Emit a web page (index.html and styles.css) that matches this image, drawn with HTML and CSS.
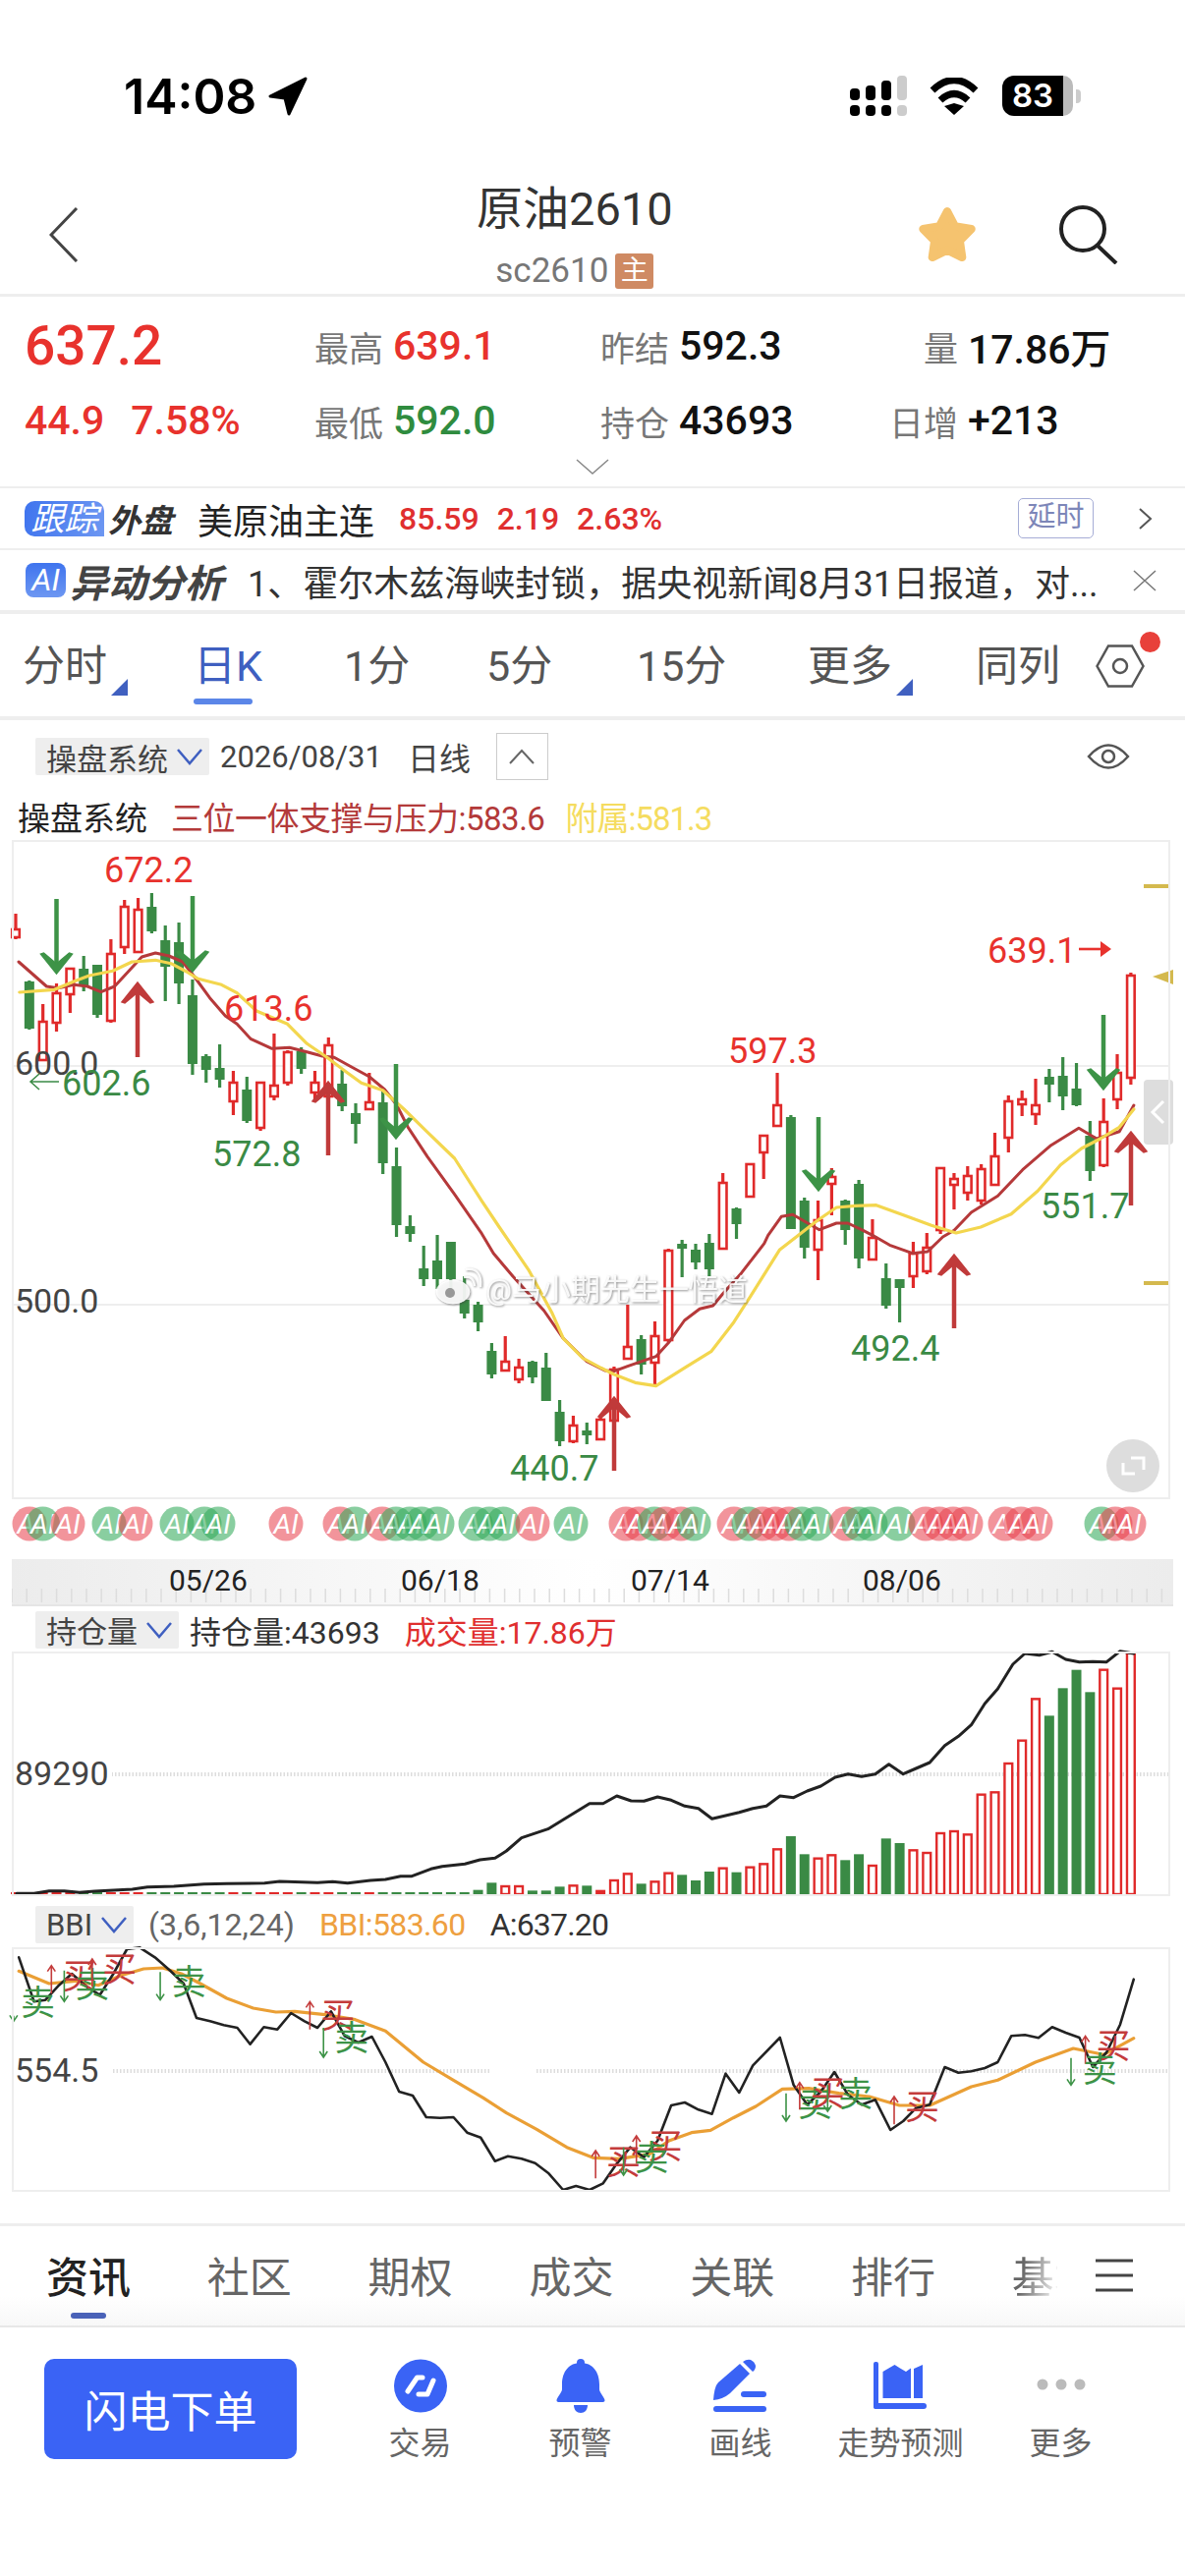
FILE: index.html
```html
<!DOCTYPE html>
<html lang="zh-CN">
<head>
  <meta charset="UTF-8" />
  <meta name="viewport" content="width=device-width, initial-scale=1.0"/>
  <title>原油2610</title>
  <link rel="stylesheet" href="styles.css">
</head>
<body>
  <div class="status-bar">
    <div class="status-left">
      <span class="time">14:08</span>
      <svg class="loc-icon" width="42" height="40" viewBox="0 0 42 40"><path d="M39 2 3 20l15 2 4 16z" fill="#000" stroke="#000" stroke-width="3" stroke-linejoin="round"/></svg>
    </div>
    <div class="status-right">
      <svg width="58" height="41" viewBox="0 0 58 41">
        <rect x="0" y="13" width="10" height="12" rx="4"/><rect x="16" y="10" width="10" height="15" rx="4"/><rect x="32" y="5" width="10" height="20" rx="4"/><rect x="48" y="0" width="10" height="25" rx="4" fill="#ccc"/>
        <rect x="0" y="30" width="10" height="11" rx="4"/><rect x="16" y="30" width="10" height="11" rx="4"/><rect x="32" y="30" width="10" height="11" rx="4"/><rect x="48" y="30" width="10" height="11" rx="4" fill="#ccc"/>
      </svg>
      <svg class="wifi" width="52" height="38" viewBox="0 0 52 38">
        <path d="M4 13Q26-8 48 13" fill="none" stroke="#000" stroke-width="7"/>
        <path d="M12 23Q26 10 40 23" fill="none" stroke="#000" stroke-width="7"/>
        <path d="M16 29 26 26 36 29 26 38z"/>
      </svg>
      <div class="battery"><div class="battery-fill">83</div><div class="battery-rest"></div><div class="battery-nub"></div></div>
    </div>
  </div>

  <div class="nav">
    <svg class="nav-back" width="30" height="56" viewBox="0 0 30 56"><path d="M28 1 2 28l26 27" fill="none" stroke="#444" stroke-width="3"/></svg>
    <div class="nav-title">
      <div class="nav-name">原油2610</div>
      <div class="nav-code">sc2610<span class="main-tag">主</span></div>
    </div>
    <div class="nav-actions">
      <svg width="62" height="62" viewBox="0 0 60 60"><polygon points="30,7 37.6,21.5 53.8,24.3 42.4,36 44.7,52.2 30,45 15.3,52.2 17.6,36 6.2,24.3 22.4,21.5" fill="#f5c36f" stroke="#f5c36f" stroke-width="8" stroke-linejoin="round"/></svg>
      <svg width="60" height="60" viewBox="0 0 60 60"><circle cx="24" cy="24" r="22" fill="none" stroke="#222" stroke-width="4"/><path d="M39 41 58 59" stroke="#222" stroke-width="4"/></svg>
    </div>
  </div>

  <div class="quote">
    <div class="quote-grid">
      <div class="price">637.2</div>
      <div class="cell"><span class="cell-label">最高</span><span class="cell-value up">639.1</span></div>
      <div class="cell"><span class="cell-label">昨结</span><span class="cell-value">592.3</span></div>
      <div class="cell cell-end"><span class="cell-label">量</span><span class="cell-value">17.86万</span></div>
      <div class="change"><span>44.9</span><span>7.58%</span></div>
      <div class="cell"><span class="cell-label">最低</span><span class="cell-value down">592.0</span></div>
      <div class="cell"><span class="cell-label">持仓</span><span class="cell-value">43693</span></div>
      <div class="cell cell-end"><span class="cell-label">日增</span><span class="cell-value">+213</span></div>
    </div>
    <svg class="quote-more" width="34" height="16" viewBox="0 0 34 16"><path d="M1 1 17 15 33 1" fill="none" stroke="#888" stroke-width="1.5"/></svg>
  </div>

  <div class="follow-row">
    <span class="follow-tag">跟踪</span><span class="follow-sub">外盘</span>
    <span class="follow-name">美原油主连</span>
    <span class="follow-num">85.59</span><span class="follow-num">2.19</span><span class="follow-num">2.63%</span>
    <span class="delay-tag">延时</span>
    <svg width="15" height="22" viewBox="0 0 15 22"><path d="M2 1 13 11 2 21" fill="none" stroke="#555" stroke-width="2"/></svg>
  </div>

  <div class="ai-row">
    <span class="ai-tag">AI</span><span class="ai-title">异动分析</span>
    <span class="ai-text">1、霍尔木兹海峡封锁，据央视新闻8月31日报道，对...</span>
    <svg width="24" height="22" viewBox="0 0 24 22"><path d="M1 1 23 21M23 1 1 21" fill="none" stroke="#777" stroke-width="1.5"/></svg>
  </div>

  <div class="period-tabs">
    <div class="period">分时<i class="corner"></i></div>
    <div class="period period-on">日K</div>
    <div class="period">1分</div>
    <div class="period">5分</div>
    <div class="period">15分</div>
    <div class="period">更多<i class="corner"></i></div>
    <div class="period">同列</div>
    <div class="period period-gear">
      <svg width="50" height="44" viewBox="0 0 50 44"><path d="M1.5 22 13 1.5H37L48.5 22 37 42.5H13Z" fill="none" stroke="#555" stroke-width="2.5"/><circle cx="25" cy="22" r="7" fill="none" stroke="#555" stroke-width="2.5"/></svg>
      <i class="red-dot"></i>
    </div>
  </div>

  <div class="chart-head">
    <div class="picker">操盘系统<svg width="26" height="18" viewBox="0 0 26 18"><path d="M1 2 13 16 25 2" fill="none" stroke="#3f5fc0" stroke-width="2.5"/></svg></div>
    <span class="chart-date">2026/08/31</span>
    <span class="chart-kind">日线</span>
    <div class="fold-btn"><svg width="26" height="16" viewBox="0 0 26 16"><path d="M1 15 13 2 25 15" fill="none" stroke="#666" stroke-width="2"/></svg></div>
    <svg class="eye" width="44" height="30" viewBox="0 0 44 30"><path d="M2 15Q22-8 42 15 22 38 2 15Z" fill="none" stroke="#555" stroke-width="2.5"/><circle cx="22" cy="15" r="6" fill="none" stroke="#555" stroke-width="2.5"/></svg>
  </div>
  <div class="chart-legend">
    <span>操盘系统</span>
    <span class="legend-red">三位一体支撑与压力:583.6</span>
    <span class="legend-yellow">附属:581.3</span>
  </div>
  <div class="panel panel-main"><svg id="mainChart" viewBox="12 856 1179 671"></svg></div>
  <svg id="aiMarks" class="ai-marks" viewBox="0 1527 1206 61"></svg>
  <svg id="timeAxis" class="time-axis" viewBox="12 1588 1182 49"></svg>

  <div class="sub-head">
    <div class="picker">持仓量<svg width="26" height="18" viewBox="0 0 26 18"><path d="M1 2 13 16 25 2" fill="none" stroke="#3f5fc0" stroke-width="2.5"/></svg></div>
    <span class="sub-text">持仓量:43693</span>
    <span class="sub-red">成交量:17.86万</span>
  </div>
  <div class="panel panel-sub"><svg id="volChart" viewBox="12 1682 1179 249"></svg></div>

  <div class="sub-head sub-head-bbi">
    <div class="picker">BBI<svg width="26" height="18" viewBox="0 0 26 18"><path d="M1 2 13 16 25 2" fill="none" stroke="#3f5fc0" stroke-width="2.5"/></svg></div>
    <span class="sub-gray">(3,6,12,24)</span>
    <span class="sub-orange">BBI:583.60</span>
    <span class="sub-text">A:637.20</span>
  </div>
  <div class="panel panel-sub"><svg id="bbiChart" viewBox="12 1983 1179 249"></svg></div>

  <div class="info-tabs">
    <div class="info-tab info-tab-on">资讯</div>
    <div class="info-tab">社区</div>
    <div class="info-tab">期权</div>
    <div class="info-tab">成交</div>
    <div class="info-tab">关联</div>
    <div class="info-tab">排行</div>
    <div class="info-tab info-tab-fade">基本</div>
    <svg class="info-menu" width="38" height="34" viewBox="0 0 38 34"><path d="M0 2H38M0 17H38M0 32H38" stroke="#444" stroke-width="3"/></svg>
  </div>

  <div class="bottom-bar">
    <button class="order-btn">闪电下单</button>
    <div class="action">
      <svg width="54" height="55" viewBox="0 0 54 55"><circle cx="27" cy="27.5" r="27" fill="#3a63f5"/><path d="M14 33 23.500 19H29M25 36H34L40 22" fill="none" stroke="#fff" stroke-width="5" stroke-linecap="round" stroke-linejoin="round"/></svg>
      <span>交易</span>
    </div>
    <div class="action">
      <svg width="50" height="55" viewBox="0 0 50 55"><circle cx="25" cy="4" r="4" fill="#3a63f5"/><path d="M25 4C13 4 6 13 6 26v5c0 3-5 8-5.500 11-.2 1 .8 2 2 2h45c1.200 0 2.200-1 2-2-.5-3-5.500-8-5.500-11v-5C44 13 37 4 25 4z" fill="#3a63f5"/><path d="M18 47h14c0 5-3 8-7 8s-7-3-7-8z" fill="#3a63f5"/></svg>
      <span>预警</span>
    </div>
    <div class="action">
      <svg width="55" height="55" viewBox="0 0 55 55"><path d="M0 42Q1 28 5 24L27 5 37 15 17 35Q10 41 0 42Z" fill="#3a63f5"/><path d="M30 3Q34 0 38 1 42 3 43 7 43 11 40 13Z" fill="#3a63f5"/><rect x="28" y="33" width="26" height="6" rx="3" fill="#3a63f5"/><rect x="0" y="48" width="54" height="6" rx="3" fill="#3a63f5"/></svg>
      <span>画线</span>
    </div>
    <div class="action">
      <svg width="55" height="55" viewBox="0 0 55 55"><rect x="0" y="3" width="5" height="48" rx="2" fill="#3a63f5"/><rect x="0" y="45" width="54" height="6" rx="3" fill="#3a63f5"/><path d="M9.500 13 21.500 6 27 9.500 33 13 38 9.500V40H9.500Z" fill="#3a63f5"/><path d="M41 10 50 6V40H41Z" fill="#3a63f5"/></svg>
      <span>走势预测</span>
    </div>
    <div class="action">
      <svg width="50" height="55" viewBox="0 0 50 55"><circle cx="6" cy="26" r="5.5" fill="#bbb"/><circle cx="25" cy="26" r="5.5" fill="#bbb"/><circle cx="44" cy="26" r="5.5" fill="#bbb"/></svg>
      <span>更多</span>
    </div>
  </div>

  <script src="chart.js"></script>
</body>
</html>
```
FILE: styles.css
```css
* {
  box-sizing: border-box;
}

html, body {
  margin: 0;
  padding: 0;
}

body {
  width: 1206px;
  height: 2622px;
  overflow: hidden;
  background-color: #fff;
  color: #222;
  font-family: Roboto, 'Noto Sans CJK SC', sans-serif;
}

svg {
  display: block;
  flex-shrink: 0;
}

/* status bar */
.status-bar {
  height: 175px;
  padding: 77px 106px 0 126px;
  display: flex;
  justify-content: space-between;
  align-items: flex-start;
}

.status-left {
  display: flex;
  align-items: center;
  gap: 11px;
  height: 41px;
}

.time {
  font-family: Inter, sans-serif;
  font-size: 50px;
  font-weight: 600;
  color: #000;
}

.status-right {
  display: flex;
  align-items: flex-start;
  gap: 22px;
}

.wifi {
  margin-top: 2px;
}

.battery {
  display: flex;
  align-items: center;
  height: 41px;
  margin-left: 1px;
}

.battery-fill {
  width: 62px;
  height: 41px;
  background-color: #000;
  color: #fff;
  border-radius: 12px 0 0 12px;
  font-family: Inter, sans-serif;
  font-size: 33px;
  font-weight: 600;
  line-height: 41px;
  text-align: center;
}

.battery-rest {
  width: 10px;
  height: 41px;
  background-color: #bbb;
  border-radius: 0 10px 10px 0;
}

.battery-nub {
  width: 5px;
  height: 14px;
  margin-left: 3px;
  background-color: #ccc;
  border-radius: 0 4px 4px 0;
}

/* nav */
.nav {
  height: 127px;
  padding: 4px 68px 0 50px;
  display: grid;
  grid-template-columns: 435px auto 1fr;
  align-items: center;
  border-bottom: 3px solid #eee;
}

.nav-title {
  text-align: center;
}

.nav-name {
  font-size: 47px;
  line-height: 58px;
  color: #333;
}

.nav-code {
  display: flex;
  align-items: center;
  justify-content: center;
  gap: 7px;
  margin-top: 16px;
  font-size: 35px;
  line-height: 36px;
  color: #777;
}

.main-tag {
  width: 39px;
  height: 36px;
  background-color: #cf8a63;
  color: #fff;
  border-radius: 3px;
  font-size: 28px;
  text-align: center;
}

.nav-actions {
  display: flex;
  justify-content: flex-end;
  align-items: center;
  gap: 83px;
}

/* quote block */
.quote {
  height: 195px;
  padding: 25px 0 0 25px;
  border-bottom: 2px solid #eee;
}

.quote-grid {
  display: grid;
  grid-template-columns: 295px 291px 294px auto;
  grid-auto-rows: 50px;
  row-gap: 26px;
  align-items: center;
}

.price {
  font-size: 55px;
  font-weight: 500;
  color: #e8322d;
}

.change {
  display: flex;
  gap: 27px;
  font-size: 41px;
  font-weight: 500;
  color: #e8322d;
}

.cell {
  display: flex;
  align-items: center;
  gap: 10px;
}

.cell-label {
  font-size: 35px;
  color: #777;
  white-space: nowrap;
}

.cell-value {
  font-size: 41px;
  font-weight: 500;
  color: #111;
}

.cell-end .cell-label {
  width: 70px;
  text-align: right;
}

.up {
  color: #e8322d;
}

.down {
  color: #2f8c3f;
}

.quote-more {
  margin: 14px 0 0 561px;
}

/* follow + ai rows */
.follow-row, .ai-row {
  display: flex;
  align-items: center;
  border-bottom: 2px solid #eee;
  padding-left: 25px;
}

.follow-row {
  height: 63px;
}

.follow-tag {
  width: 81px;
  height: 36px;
  background: linear-gradient(100deg, #3f74ee, #6d97f2);
  border-radius: 10px 10px 0 10px;
  color: #fff;
  font-size: 34px;
  font-style: italic;
  line-height: 36px;
  text-align: center;
}

.follow-sub {
  margin-left: 4px;
  font-size: 33px;
  font-style: italic;
  font-weight: 700;
  color: #333;
}

.follow-name {
  margin-left: 25px;
  font-size: 36px;
  color: #222;
}

.follow-num {
  margin-left: 18px;
  font-size: 32px;
  font-weight: 500;
  color: #e02f2f;
}

.follow-name + .follow-num {
  margin-left: 25px;
}

.delay-tag {
  width: 77px;
  height: 41px;
  margin: 0 45px 0 auto;
  border: 1.5px solid #a6add6;
  border-radius: 5px;
  color: #7d86b8;
  font-size: 29px;
  line-height: 37px;
  text-align: center;
}

.follow-row svg {
  margin-right: 33px;
}

.ai-row {
  height: 65px;
  border-bottom-width: 4px;
  padding-left: 26px;
}

.ai-tag {
  width: 41px;
  height: 35px;
  background: linear-gradient(#3f74ee, #6d97f2);
  border-radius: 8px;
  color: #fff;
  font-size: 32px;
  font-style: italic;
  line-height: 35px;
  text-align: center;
}

.ai-title {
  margin-left: 4px;
  font-size: 39px;
  font-style: italic;
  font-weight: 700;
  color: #444;
}

.ai-text {
  margin-left: 25px;
  width: 901px;
  font-size: 36px;
  color: #333;
  white-space: nowrap;
}

/* period tabs */
.period-tabs {
  height: 108px;
  padding: 2px 0 0 23px;
  display: grid;
  grid-template-columns: 174px 153px 145px 153px 174px 171px 122px auto;
  align-items: center;
  border-bottom: 4px solid #eee;
}

.period {
  position: relative;
  display: flex;
  align-items: flex-end;
  font-size: 43px;
  line-height: 56px;
  color: #555;
}

.corner {
  width: 0;
  height: 0;
  margin: 0 0 -2px 4px;
  border-left: 17px solid transparent;
  border-bottom: 17px solid #4060c0;
}

.period-on {
  color: #3f5fc0;
}

.period-on::after {
  content: "";
  position: absolute;
  left: 0;
  bottom: -11px;
  width: 60px;
  height: 6px;
  background-color: #5b86e8;
  border-radius: 3px;
}

.period-gear {
  align-items: center;
}

.red-dot {
  position: absolute;
  left: 45px;
  top: -13px;
  width: 21px;
  height: 21px;
  background-color: #e8403a;
  border-radius: 50%;
}

/* chart heads */
.chart-head {
  height: 74px;
  padding-left: 36px;
  display: flex;
  align-items: center;
  font-size: 32px;
  color: #444;
}

.picker {
  height: 38px;
  padding: 0 7px 0 11px;
  display: flex;
  align-items: center;
  gap: 9px;
  background-color: #eee;
  border-radius: 2px;
  font-size: 31px;
  color: #444;
}

.chart-date {
  margin-left: 11px;
  font-size: 31px;
}

.chart-kind {
  margin-left: 26px;
}

.fold-btn {
  width: 53px;
  height: 48px;
  margin-left: 26px;
  display: flex;
  align-items: center;
  justify-content: center;
  border: 1.5px solid #ccc;
}

.eye {
  margin-left: auto;
  margin-right: 56px;
}

.chart-legend {
  height: 48px;
  padding-left: 18px;
  display: flex;
  align-items: center;
  gap: 24px;
  font-size: 33px;
  color: #222;
}

.legend-red {
  color: #b33a3a;
  letter-spacing: -0.5px;
}

.legend-yellow {
  margin-left: -3px;
  color: #f5dc60;
  letter-spacing: -1px;
}

.panel {
  width: 1179px;
  margin-left: 12px;
  outline: 2px solid #eee;
  outline-offset: -2px;
}

.panel svg {
  width: 100%;
  height: 100%;
  overflow: visible;
}

.panel-main {
  height: 671px;
}

.panel-sub {
  height: 249px;
}

.ai-marks {
  width: 1206px;
  height: 61px;
}

.time-axis {
  width: 1182px;
  height: 49px;
  margin-left: 12px;
}

.sub-head {
  height: 45px;
  padding-left: 36px;
  display: flex;
  align-items: center;
  font-size: 32px;
}

.sub-head-bbi {
  height: 52px;
  padding-top: 6px;
}

.sub-text {
  margin-left: 11px;
  color: #333;
}

.sub-red {
  margin-left: 25px;
  color: #e02f2f;
}

.sub-gray {
  margin-left: 15px;
  color: #666;
}

.sub-orange {
  margin-left: 25px;
  color: #eea040;
  letter-spacing: -0.6px;
}

.sub-orange + .sub-text {
  margin-left: 25px;
  letter-spacing: -0.8px;
}

/* svg chart text */
.lb {
  font-family: Roboto, sans-serif;
  font-size: 36px;
}

.lb-axis {
  font-size: 34px;
  fill: #444;
}

.lb-up {
  fill: #e8322d;
}

.lb-down {
  fill: #3a8a45;
}

.lb-date {
  font-size: 30px;
  fill: #222;
}

.mark-ai {
  font-family: Roboto, sans-serif;
  font-size: 28px;
  font-style: italic;
  fill: #fff;
  text-anchor: middle;
}

.mark-bs {
  font-family: 'Noto Sans CJK SC', sans-serif;
  font-size: 35px;
  text-anchor: middle;
}

.watermark {
  font-family: Roboto, 'Noto Sans CJK SC', sans-serif;
  font-size: 30px;
  fill: rgba(255, 255, 255, 0.9);
  filter: drop-shadow(1px 1px 1px rgba(60, 60, 60, 0.6));
}

.watermark-logo {
  fill: rgba(255, 255, 255, 0.9);
  stroke: rgba(255, 255, 255, 0.9);
  filter: drop-shadow(1px 1px 1px rgba(60, 60, 60, 0.6));
}

/* bottom tabs */
.info-tabs {
  position: relative;
  height: 106px;
  margin-top: 32px;
  padding-left: 47px;
  display: flex;
  align-items: flex-start;
  border-top: 3px solid #eee;
  border-bottom: 2px solid #e8e8e8;
  background: linear-gradient(#fff 70%, #f8f8f8);
}

.info-tab {
  position: relative;
  width: 163.8px;
  padding-top: 23px;
  font-size: 43px;
  line-height: 60px;
  color: #666;
}

.info-tab-on {
  color: #222;
  font-weight: 500;
}

.info-tab-on::after {
  content: "";
  position: absolute;
  left: 25px;
  top: 88px;
  width: 36px;
  height: 6px;
  background-color: #4a62b8;
  border-radius: 3px;
}

.info-tab-fade {
  width: 46px;
  overflow: hidden;
  white-space: nowrap;
  -webkit-mask-image: linear-gradient(100deg, #000 30%, transparent);
  mask-image: linear-gradient(100deg, #000 30%, transparent);
}

.info-menu {
  position: absolute;
  left: 1115px;
  top: 33px;
}

.bottom-bar {
  padding: 32px 0 0 45px;
  display: flex;
  align-items: flex-start;
}

.order-btn {
  width: 257px;
  height: 102px;
  margin-right: 44px;
  border: none;
  border-radius: 10px;
  background-color: #3a63f5;
  color: #fff;
  font-family: Roboto, 'Noto Sans CJK SC', sans-serif;
  font-size: 44px;
}

.action {
  width: 163px;
  display: flex;
  flex-direction: column;
  align-items: center;
  font-size: 32px;
  line-height: 40px;
  color: #666;
}

.action svg {
  margin-bottom: 11px;
}
```
FILE: chart.js
```js
// [colour, high, body top, body bottom, low]
const candles = [
  ['r',931,947,955,957],['g',999,1000,1048,1049],['r',1023,1041,1080,1081],['r',1002,1012,1042,1051],
  ['r',987,987,1013,1032],['g',974,987,1005,1010],['g',983,983,1034,1037],['r',957,972,1040,1042],
  ['r',917,924,965,972],['r',915,927,970,970],['g',910,924,949,951],['g',943,958,985,1020],
  ['g',940,960,1002,1023],['g',998,1014,1084,1095],['g',1074,1076,1090,1103],['g',1064,1088,1100,1108],
  ['r',1091,1103,1122,1136],['g',1097,1110,1142,1144],['r',1102,1103,1149,1152],['r',1053,1106,1117,1121],
  ['r',1070,1072,1103,1106],['g',1067,1071,1089,1094],['r',1091,1103,1113,1120],['r',1057,1065,1117,1120],
  ['g',1090,1104,1127,1132],['g',1124,1134,1145,1165],['r',1093,1123,1130,1131],['g',1112,1123,1185,1196],
  ['g',1169,1188,1248,1260],['g',1238,1249,1257,1265],['g',1269,1292,1303,1310],['g',1258,1284,1303,1313],
  ['g',1265,1265,1303,1313],['g',1300,1324,1338,1343],['g',1326,1329,1347,1356],['g',1368,1376,1400,1404],
  ['r',1361,1387,1396,1397],['r',1384,1393,1405,1409],['g',1386,1387,1403,1409],['g',1378,1393,1427,1427],
  ['g',1426,1438,1468,1473],['r',1442,1452,1468,1470],['g',1449,1457,1462,1471],['r',1443,1446,1466,1467],
  ['r',1392,1395,1447,1447],['r',1329,1372,1384,1384],['g',1360,1364,1390,1400],['r',1346,1361,1388,1412],
  ['r',1272,1274,1365,1367],['g',1263,1267,1272,1301],['g',1267,1273,1286,1293],['g',1257,1266,1293,1300],
  ['r',1195,1205,1272,1272],['g',1230,1231,1247,1262],['r',1186,1186,1219,1219],['r',1157,1157,1174,1201],
  ['r',1093,1126,1147,1147],['g',1136,1138,1252,1252],['g',1220,1223,1271,1282],['r',1223,1243,1273,1304],
  ['r',1190,1199,1206,1238],['g',1222,1223,1253,1268],['g',1202,1206,1282,1292],['r',1242,1261,1283,1283],
  ['g',1287,1302,1330,1333],['g',1303,1303,1312,1347],['r',1265,1277,1300,1312],['r',1256,1271,1295,1298],
  ['r',1190,1190,1253,1257],['r',1195,1201,1207,1232],['r',1188,1198,1215,1223],['r',1186,1191,1223,1227],
  ['r',1154,1178,1207,1208],['r',1116,1122,1159,1174],['r',1111,1120,1125,1137],['r',1099,1126,1135,1146],
  ['g',1089,1097,1105,1123],['g',1077,1096,1117,1131],['g',1083,1109,1126,1127],['g',1142,1157,1193,1203],
  ['r',1119,1143,1187,1189],['r',1074,1093,1120,1130],['r',991,994,1098,1105]
];

const STEP = 13.84;
const RED = '#e8322d';
const GREEN = '#3a8a45';

function cx(i) {
  return 16 + STEP * i;
}

// line points were read from three different crops, so convert them first
function crop(points, sx, ox, oy) {
  return points.map(p => [ox + p[0] / sx, oy + p[1] / 3]);
}

function polyline(points, color, width) {
  const d = points.map(p => p[0].toFixed(1) + ',' + p[1].toFixed(1)).join(' ');
  return `<polyline points="${d}" fill="none" stroke="${color}" stroke-width="${width}" stroke-linejoin="round" stroke-linecap="round"/>`;
}

function bigArrow(x, top, bottom, color, dir) {
  const tip = dir === 'up' ? top : bottom;
  const s = dir === 'up' ? 1 : -1;
  const tail = dir === 'up' ? bottom : top;
  return `<path d="M${x} ${tip + 6 * s}V${tail}" stroke="${color}" stroke-width="4.5"/>` +
    `<path d="M${x} ${tip}L${x + 16} ${tip + 20 * s}L${x + 13} ${tip + 21 * s}L${x} ${tip + 10 * s}L${x - 13} ${tip + 21 * s}L${x - 16} ${tip + 20 * s}Z" fill="${color}" stroke="${color}" stroke-width="1.5"/>`;
}

function label(text, x, y, cls) {
  return `<text class="lb ${cls}" x="${x}" y="${y}">${text}</text>`;
}

function drawMain() {
  let html = '';
  html += '<path d="M12 1086H1191M12 1329H1191" stroke="#eee" stroke-width="2"/>';

  candles.forEach((c, i) => {
    const x = cx(i);
    const color = c[0] === 'r' ? '#e02a2a' : '#3a8a45';
    if (c[0] === 'g') {
      html += `<path d="M${x} ${c[1]}V${c[4]}" stroke="${color}" stroke-width="3.2"/>`;
      html += `<rect x="${x - 5}" y="${c[2]}" width="10" height="${c[3] - c[2]}" fill="${color}"/>`;
    } else {
      html += `<path d="M${x} ${c[1]}V${c[2]}M${x} ${c[3]}V${c[4]}" stroke="${color}" stroke-width="3.2"/>`;
      html += `<rect x="${x - 3.8}" y="${c[2]}" width="7.6" height="${c[3] - c[2]}" fill="#fff" stroke="${color}" stroke-width="2.6"/>`;
    }
  });

  const redLine = [].concat(
    crop([[48,420],[120,495],[150,500],[190,490],[225,495],[260,512],[295,495],[330,450],[365,405],[400,393],[435,402],[470,420],[500,465],[540,530],[580,585],[610,610],[645,655],[700,685],[745,682],[790,695],[830,708],[860,712],[900,738],[950,770],[990,810],[1020,855],[1050,925],[1100,1015],[1170,1130],[1240,1250]], 2.529, 0, 840),
    crop([[1270,80],[1320,150],[1400,255],[1450,340],[1510,410]], 2.529, 0, 1250),
    crop([[40,438],[65,440],[100,425],[175,395],[210,350],[250,285],[290,250],[325,240],[350,205],[400,140],[460,50]], 2.587, 600, 1250),
    crop([[470,1255],[505,1198],[535,1192],[570,1215],[605,1238],[650,1218],[680,1218],[720,1240]], 2.587, 600, 840),
    crop([[745,25],[790,55],[850,80],[890,75],[930,30]], 2.587, 600, 1250),
    crop([[960,1240],[1005,1185],[1075,1135],[1140,1055],[1215,980],[1288,928],[1335,960],[1395,938],[1433,858]], 2.587, 600, 840)
  );
  const yellowLine = [].concat(
    crop([[50,513],[140,505],[190,480],[230,462],[290,448],[340,420],[400,415],[440,425],[480,450],[510,472],[570,490],[610,515],[660,570],[740,610],[790,670],[840,710],[890,755],[930,790],[985,812],[1040,870],[1100,940],[1170,1020],[1240,1150]], 2.529, 0, 840),
    crop([[1285,0],[1360,130],[1420,260],[1450,340],[1500,400]], 2.529, 0, 1250),
    crop([[30,430],[65,450],[120,475],[175,485],[250,430],[320,380],[380,290],[430,200],[500,70]], 2.587, 600, 1250),
    crop([[600,1210],[650,1170],[700,1165],[755,1163],[830,1195],[900,1225],[965,1248],[1030,1230],[1110,1190],[1180,1120],[1240,1040],[1295,990],[1345,960],[1395,925],[1433,870]], 2.587, 600, 840)
  );
  html += polyline(redLine, '#b5393a', 3);
  html += polyline(yellowLine, '#f3d64e', 3.2);

  html += bigArrow(57.5, 916, 992, '#3d9347', 'down');
  html += bigArrow(196, 913, 990, '#3d9347', 'down');
  html += bigArrow(140, 1001, 1077, '#c03a3a', 'up');
  html += bigArrow(334, 1102, 1177, '#c03a3a', 'up');
  html += bigArrow(403, 1084, 1160, '#3d9347', 'down');
  html += bigArrow(625, 1423, 1498, '#c03a3a', 'up');
  html += bigArrow(833, 1138, 1213, '#3d9347', 'down');
  html += bigArrow(971, 1278, 1353, '#c03a3a', 'up');
  html += bigArrow(1123, 1034, 1110, '#3d9347', 'down');
  html += bigArrow(1151, 1153, 1228, '#c03a3a', 'up');

  html += label('672.2', 106, 899, 'lb-up');
  html += label('613.6', 228, 1040, 'lb-up');
  html += label('597.3', 741, 1083, 'lb-up');
  html += label('639.1', 1005, 981, 'lb-up');
  html += label('600.0', 15, 1095, 'lb-axis');
  html += label('500.0', 15, 1337, 'lb-axis');
  html += label('602.6', 63, 1116, 'lb-down');
  html += label('572.8', 216, 1188, 'lb-down');
  html += label('440.7', 519, 1508, 'lb-down');
  html += label('492.4', 866, 1386, 'lb-down');
  html += label('551.7', 1059, 1241, 'lb-down');

  html += `<path d="M31 1102H60M40 1094 31 1102 40 1110" fill="none" stroke="${GREEN}" stroke-width="1.5"/>`;
  html += `<path d="M1098 967H1124" stroke="${RED}" stroke-width="2.6"/><path d="M1120 959 1131 967 1120 975Z" fill="${RED}"/>`;

  // gold marks on the right edge
  html += '<path d="M1164 903H1191M1164 1307H1191" stroke="#d4b94e" stroke-width="4"/>';
  html += '<path d="M1173 995 1194 988V1003Z" fill="#d4b94e"/>';

  // side handle and full screen button
  html += '<rect x="1164" y="1100" width="30" height="66" rx="4" fill="#ddd"/>';
  html += '<path d="M1184 1122 1173 1133 1184 1144" fill="none" stroke="#fff" stroke-width="3"/>';
  html += '<circle cx="1153" cy="1493" r="27" fill="#ddd"/>';
  html += '<path d="M1151 1485H1164V1497M1155 1501H1143V1490" fill="none" stroke="#fff" stroke-width="3"/>';

  // weibo watermark
  html += '<g class="watermark-logo"><ellipse cx="461" cy="1316" rx="17" ry="12"/><path fill="none" stroke-width="2.5" d="M472 1301Q482 1299 483 1310M474 1293Q491 1291 489 1311"/></g>';
  html += '<circle cx="458" cy="1317" r="5" fill="rgba(90,90,90,.6)"/>';
  html += '<text class="watermark" x="494" y="1324">@马小期先生一悟道</text>';

  document.getElementById('mainChart').innerHTML = html;
}

function drawMarks() {
  const reds = [30,69,138,291,346,389,542,637,650,677,693,747,776,789,803,861,942,956,970,983,1023,1039,1054,1135,1149];
  const greens = [43.5,111,180,208,222,361,403,417,429,445,484,498,512,581,666,706,762,816,831,874,886,914,1121];
  const marks = reds.map(x => [x, 'r']).concat(greens.map(x => [x, 'g'])).sort((a, b) => a[0] - b[0]);
  let html = '';
  // drawn one by one so each circle tints the text of the one before it
  marks.forEach(m => {
    const fill = m[1] === 'r' ? 'rgba(232,60,72,.55)' : 'rgba(52,170,92,.58)';
    html += `<circle cx="${m[0]}" cy="1552" r="17.5" fill="${fill}"/>`;
    html += `<text class="mark-ai" x="${m[0]}" y="1562">AI</text>`;
  });
  document.getElementById('aiMarks').innerHTML = html;
}

function drawAxis() {
  let html = '<defs><linearGradient id="axisBg"><stop offset="0" stop-color="#ececec"/><stop offset=".5" stop-color="#fff"/><stop offset="1" stop-color="#ececec"/></linearGradient></defs>';
  html += '<rect x="12" y="1588" width="1182" height="47" fill="url(#axisBg)"/>';
  html += '<path d="M12 1635H1194" stroke="#e5e5e5" stroke-width="2"/>';
  for (let x = 12; x < 1194; x += 15.2) {
    html += `<path d="M${x} 1618V1632" stroke="#ddd" stroke-width="1.5"/>`;
  }
  [['05/26', 172], ['06/18', 408], ['07/14', 642], ['08/06', 878]].forEach(t => {
    html += label(t[0], t[1], 1620, 'lb-date');
  });
  document.getElementById('timeAxis').innerHTML = html;
}

function drawVolume() {
  const tops = [891,891,891,891,891,891,891,891,891,891,891,891,891,891,891,891,891,891,891,891,891,891,891,891,891,891,891,891,891,891,891,891,891,891,884,
    862,870,870,886,886,874,868,871,884,852,832,865,856,830,838,855,828,815,830,812,802,757,720,775,785,775,793,775,807,727,741,760,768,708,702,712,590,583,495,425,298,352,268,212,280,209,266,158];
  const bottom = 1929;
  let html = '<path d="M12 1807H1191" stroke="#ddd" stroke-width="4" stroke-dasharray="1.5 2"/>';
  html += '<rect x="12" y="1790" width="102" height="30" fill="#fff"/>';
  tops.forEach((t, i) => {
    const y = 1630 + t / 3;
    const x = cx(i);
    if (candles[i][0] === 'g') {
      html += `<rect x="${x - 5}" y="${y}" width="10" height="${bottom - y}" fill="#3a8a45"/>`;
    } else if (bottom - y < 6) {
      html += `<rect x="${x - 5}" y="${y}" width="10" height="${bottom - y}" fill="#e02a2a"/>`;
    } else {
      html += `<rect x="${x - 3.9}" y="${y + 1}" width="7.8" height="${bottom - y - 1}" fill="#fff" stroke="#e02a2a" stroke-width="2.4"/>`;
    }
  });
  const oi = crop([[22,895],[45,895],[65,887],[85,887],[105,892],[125,888],[150,885],[175,882],[195,875],[230,873],[270,866],[300,865],[350,863],[370,858],[400,860],[420,862],[440,859],[460,863],[490,855],[510,852],[530,842],[545,842],[570,820],[585,812],[615,805],[635,792],[655,787],[670,765],[690,725],[725,698],[745,670],[780,620],[798,620],[816,597],[835,612],[852,613],[870,600],[888,610],[906,628],[924,635],[942,667],[960,657],[978,647],[996,635],[1014,628],[1032,597],[1050,602],[1068,582],[1086,567],[1105,540],[1122,530],[1140,538],[1158,530],[1176,500],[1195,530],[1212,513],[1230,495],[1250,443],[1268,415],[1285,380],[1303,315],[1320,270],[1340,195],[1356,162],[1375,167],[1392,157],[1410,180],[1428,188],[1446,187],[1464,188],[1482,155],[1500,162]], 1.3, 0, 1630);
  html += polyline(oi, '#222', 3);
  html += label('89290', 15, 1818, 'lb-axis');
  document.getElementById('volChart').innerHTML = html;
}

function bsMark(kind, zx, zy, ax, a1, a2) {
  const color = kind === '买' ? '#c43c3c' : '#3d9347';
  const x = zx / 1.3;
  const y = 1930 + zy / 3;
  const arrowX = ax / 1.3;
  const top = 1930 + a1 / 3;
  const bot = 1930 + a2 / 3;
  const head = kind === '买'
    ? `M${arrowX - 4} ${top + 6}L${arrowX} ${top}L${arrowX + 4} ${top + 6}`
    : `M${arrowX - 4} ${bot - 6}L${arrowX} ${bot}L${arrowX + 4} ${bot - 6}`;
  return `<path d="M${arrowX} ${top}V${bot}${head}" fill="none" stroke="${color}" stroke-width="1.6"/>` +
    `<text class="mark-bs" x="${x}" y="${y + 12}" fill="${color}">${kind}</text>`;
}

function drawBbi() {
  let html = '<path d="M115 2109H500M546 2109H1191" stroke="#ddd" stroke-width="4" stroke-dasharray="1.5 2"/>';
  const orange = crop([[25,232],[65,270],[100,262],[130,275],[160,245],[190,225],[215,222],[240,240],[265,270],[300,315],[335,345],[365,357],[390,355],[430,365],[470,380],[510,415],[560,510],[600,565],[640,620],[670,665],[710,715],[750,770],[785,802],[820,805],[860,790],[885,750],[915,725],[940,718],[970,680],[1000,645],[1035,592],[1070,590],[1110,605],[1150,615],[1190,642],[1230,642],[1285,585],[1320,565],[1370,510],[1420,468],[1460,487],[1500,437]], 1.3, 0, 1930);
  const black = crop([[25,190],[45,325],[60,320],[78,275],[95,240],[115,280],[132,305],[150,240],[168,165],[185,160],[205,190],[225,230],[243,270],[260,375],[278,385],[296,397],[314,405],[331,455],[349,403],[367,410],[385,360],[403,385],[420,405],[438,355],[456,430],[474,450],[492,432],[510,510],[528,600],[546,612],[564,678],[582,680],[600,678],[618,725],[636,740],[655,812],[672,797],[690,805],[708,818],[726,850],[745,900],[762,888],[780,900],[798,880],[816,820],[834,770],[852,800],[870,750],[888,642],[906,633],[924,655],[942,668],[960,545],[978,603],[996,520],[1032,435],[1050,580],[1068,640],[1086,600],[1104,540],[1122,610],[1140,640],[1158,625],[1178,717],[1195,690],[1212,650],[1230,640],[1250,525],[1268,542],[1285,538],[1303,528],[1320,510],[1338,430],[1356,427],[1374,436],[1392,403],[1410,420],[1428,435],[1446,525],[1464,480],[1482,395],[1500,257]], 1.3, 0, 1930);
  html += polyline(orange, '#ea9f35', 3.2);
  html += polyline(black, '#222', 2.6);

  html += bsMark('卖', 50, 330, 18, 368, 385);
  html += bsMark('买', 105, 250, 68, 215, 300);
  html += bsMark('卖', 122, 275, 85, 230, 325);
  html += bsMark('买', 158, 228, 122, 195, 280);
  html += bsMark('卖', 250, 268, 212, 235, 320);
  html += bsMark('买', 447, 368, 410, 325, 410);
  html += bsMark('卖', 465, 437, 428, 405, 495);
  html += bsMark('买', 825, 815, 788, 780, 865);
  html += bsMark('买', 880, 767, 842, 735, 820);
  html += bsMark('卖', 862, 805, 825, 770, 855);
  html += bsMark('卖', 1078, 640, 1040, 605, 690);
  html += bsMark('买', 1095, 605, 1058, 572, 655);
  html += bsMark('卖', 1132, 610, 1095, 580, 660);
  html += bsMark('买', 1220, 648, 1183, 615, 700);
  html += bsMark('买', 1473, 463, 1436, 430, 515);
  html += bsMark('卖', 1455, 535, 1417, 497, 580);

  html += label('554.5', 15, 2120, 'lb-axis');
  document.getElementById('bbiChart').innerHTML = html;
}

drawMain();
drawMarks();
drawAxis();
drawVolume();
drawBbi();
```
